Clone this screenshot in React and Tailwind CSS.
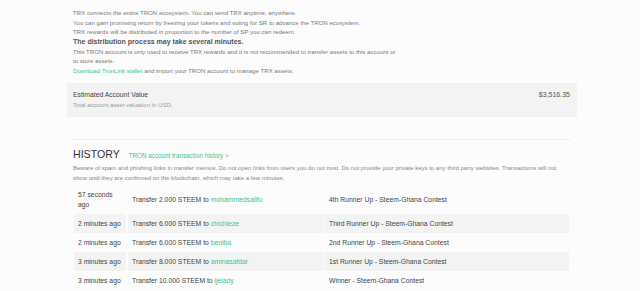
import React from "react";

const rows = [
  { t: ["57 seconds", "ago"], amt: "2.000", to: "mohammedsalifu", memo: "4th Runner Up - Steem-Ghana Contest" },
  { t: ["2 minutes ago"], amt: "6.000", to: "chichieze", memo: "Third Runner Up - Steem-Ghana Contest" },
  { t: ["2 minutes ago"], amt: "6.000", to: "beniba", memo: "2nd Runner Up - Steem-Ghana Contest" },
  { t: ["3 minutes ago"], amt: "8.000", to: "aminasafdar", memo: "1st Runner Up - Steem-Ghana Contest" },
  { t: ["3 minutes ago"], amt: "10.000", to: "ijelady", memo: "Winner - Steem-Ghana Contest" },
];

export default function App() {
  return (
    <div className="w-[640px] h-[291px] overflow-hidden bg-[#fcfcfc] font-['Liberation_Sans',Arial,sans-serif]">
      <div className="ml-[67px] w-[510px] pt-[8px]">
        <div className="px-[6px] text-[6.1px] text-[#7a7a7a]">
          <div className="h-[9.6px] leading-[9.6px] whitespace-nowrap">TRX connects the entire TRON ecosystem. You can send TRX anytime, anywhere.</div>
          <div className="h-[9.6px] leading-[9.6px] whitespace-nowrap">You can gain promising return by freezing your tokens and voting for SR to advance the TRON ecosystem.</div>
          <div className="h-[9.6px] leading-[9.6px] whitespace-nowrap">TRX rewards will be distributed in proportion to the number of SP you can redeem.</div>
          <div className="h-[10px] leading-[10px] font-bold text-[7px] text-[#555] whitespace-nowrap">The distribution process may take several minutes.</div>
          <div className="h-[9.6px] leading-[9.6px] whitespace-nowrap">This TRON account is only used to receive TRX rewards and it is not recommended to transfer assets to this account or</div>
          <div className="h-[9.6px] leading-[9.6px] whitespace-nowrap">to store assets.</div>
          <div className="h-[9.6px] leading-[9.6px] whitespace-nowrap"><span className="text-[#3cc494]">Download TronLink wallet</span> and import your TRON account to manage TRX assets.</div>
        </div>
        <div className="mt-[7.4px] h-[34px] bg-[#f3f3f3] pl-[6px] pr-[7px] pt-[7px] flex justify-between">
          <div>
            <div className="text-[6.8px] leading-[10px] text-[#444] whitespace-nowrap">Estimated Account Value</div>
            <div className="text-[6px] leading-[10px] text-[#999] whitespace-nowrap">Total account asset valuation in USD.</div>
          </div>
          <div className="text-[7px] leading-[10px] text-[#555]">$3,516.35</div>
        </div>
        <div className="mx-[6px] mt-[22px] h-px bg-[#efefef]" />
        <div className="px-[6px] mt-[8px] flex items-baseline">
          <div className="text-[10.6px] leading-[12px] text-[#333]">HISTORY</div>
          <div className="ml-[9px] text-[6.3px] text-[#3cc494] whitespace-nowrap">TRON account transaction history &gt;</div>
        </div>
        <div className="px-[6px] mt-[3px] text-[6px] leading-[10px] text-[#888]">
          Beware of spam and phishing links in transfer memos. Do not open links from users you do not trust. Do not provide your private keys to any third party websites. Transactions will not show until they are confirmed on the blockchain, which may take a few minutes.
        </div>
        <div className="ml-[7px] mt-[2px] grid grid-cols-[52px_195px_245px] gap-x-[1.5px] text-[6.8px] text-[#444]">
          {rows.map((r, i) => {
            const bg = i % 2 === 1 ? "bg-[#f3f3f3]" : "bg-transparent";
            return (
              <React.Fragment key={i}>
                <div className={`${bg} px-[4px] py-[4.5px] leading-[10px]`}>
                  {r.t.map((s, j) => (
                    <div key={j} className="whitespace-nowrap">{s}</div>
                  ))}
                </div>
                <div className={`${bg} px-[4.5px] flex items-center leading-[10px] whitespace-nowrap`}>
                  Transfer {r.amt} STEEM to&nbsp;<span className="text-[#3cc494]">{r.to}</span>
                </div>
                <div className={`${bg} px-[5px] flex items-center leading-[10px] whitespace-nowrap`}>
                  {r.memo}
                </div>
              </React.Fragment>
            );
          })}
        </div>
      </div>
    </div>
  );
}
